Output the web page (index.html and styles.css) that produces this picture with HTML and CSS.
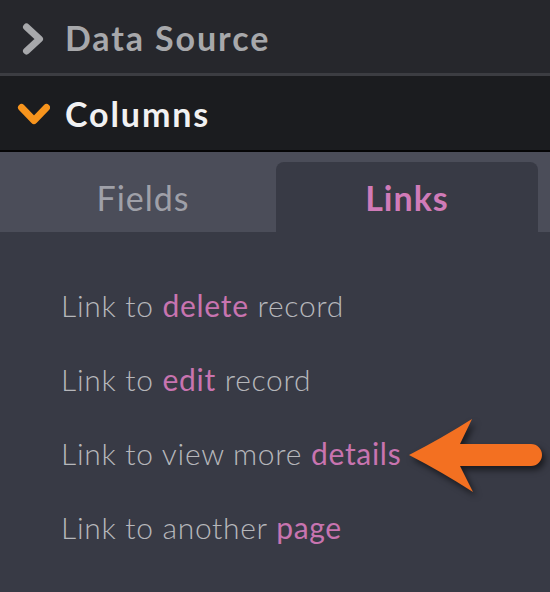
FILE: index.html
```html
<!DOCTYPE html>
<html lang="en">
  <head>
    <meta charset="UTF-8" />
    <meta name="viewport" content="width=device-width, initial-scale=1.0" />
    <title>Columns - Links</title>
    <link rel="stylesheet" href="styles.css">
  </head>
  <body>
    <div class="section-header collapsed">
      <svg class="chevron" width="36" height="36" viewBox="0 0 36 36">
        <polyline points="12.5,8 25.5,20 12.5,32" />
      </svg>
      <span>Data Source</span>
    </div>

    <div class="section-header open">
      <svg class="chevron" width="36" height="36" viewBox="0 0 36 36">
        <polyline points="7.5,11.5 20,24.5 32.5,11.5" />
      </svg>
      <span>Columns</span>
    </div>

    <div class="tabs">
      <div class="tab">Fields</div>
      <div class="tab active">Links</div>
    </div>

    <div class="content">
      <ul class="link-list">
        <li>Link to <b>delete</b> record</li>
        <li>Link to <b>edit</b> record</li>
        <li>Link to view more <b>details</b></li>
        <li>Link to another <b>page</b></li>
      </ul>

      <!-- callout arrow pointing at the "details" option -->
      <svg class="callout" width="150" height="100" viewBox="0 0 150 100">
        <path d="M9 45 Q42 28 72 9 L60 34 H131 A11 11 0 0 1 131 56 H60 L73 82 Q42 62 9 45 Z" />
      </svg>
    </div>
  </body>
</html>
```

FILE: styles.css
```css
* {
  margin: 0;
  padding: 0;
  box-sizing: border-box;
  font-family: Lato, "Open Sans", sans-serif;
}

body {
  width: 550px;
  height: 592px;
  overflow: hidden;
  background-color: #383a45;
}

.section-header {
  display: flex;
  align-items: center;
  padding-left: 14px;
  font-size: 34px;
  font-weight: bold;
  letter-spacing: 1.9px;
}

.section-header .chevron {
  margin-right: 15px;
  flex-shrink: 0;
}

.chevron polyline {
  fill: none;
  stroke-width: 7;
  stroke-linecap: round;
  stroke-linejoin: round;
}

.collapsed {
  height: 76px;
  padding-top: 1px;
  background-color: #26272c;
  border-bottom: 3px solid #3c3d42;
  color: #a7a8ab;
}

.collapsed .chevron polyline {
  stroke: #a7a8ab;
}

.open {
  height: 76px;
  padding-top: 1px;
  background-color: #1b1c1f;
  border-bottom: 2px solid #050506;
  color: #f1f1f2;
}

.open .chevron polyline {
  stroke: #f7941d;
}

.tabs {
  display: flex;
  gap: 2px;
  height: 80px;
  padding: 10px 12px 0;
  background-color: #4b4d59;
}

.tab {
  flex: 1;
  display: flex;
  align-items: center;
  justify-content: center;
  border-radius: 8px 8px 0 0;
  font-size: 34px;
  letter-spacing: 1px;
  color: #9fa0a8;
}

.tab.active {
  background-color: #383a45;
  color: #d07bb8;
  font-weight: bold;
}

.content {
  position: relative;
  padding: 36px 0 0 61px;
}

.link-list {
  list-style: none;
}

.link-list li {
  font-size: 30px;
  line-height: 74px;
  font-weight: 300;
  letter-spacing: 0.7px;
  color: #b6b7bb;
}

.link-list b {
  font-weight: normal;
  color: #c874b0;
}

.callout {
  position: absolute;
  left: 400px;
  top: 178px;
  filter: drop-shadow(3px 4px 3px rgba(0, 0, 0, 0.55));
}

.callout path {
  fill: #f37021;
}
```
